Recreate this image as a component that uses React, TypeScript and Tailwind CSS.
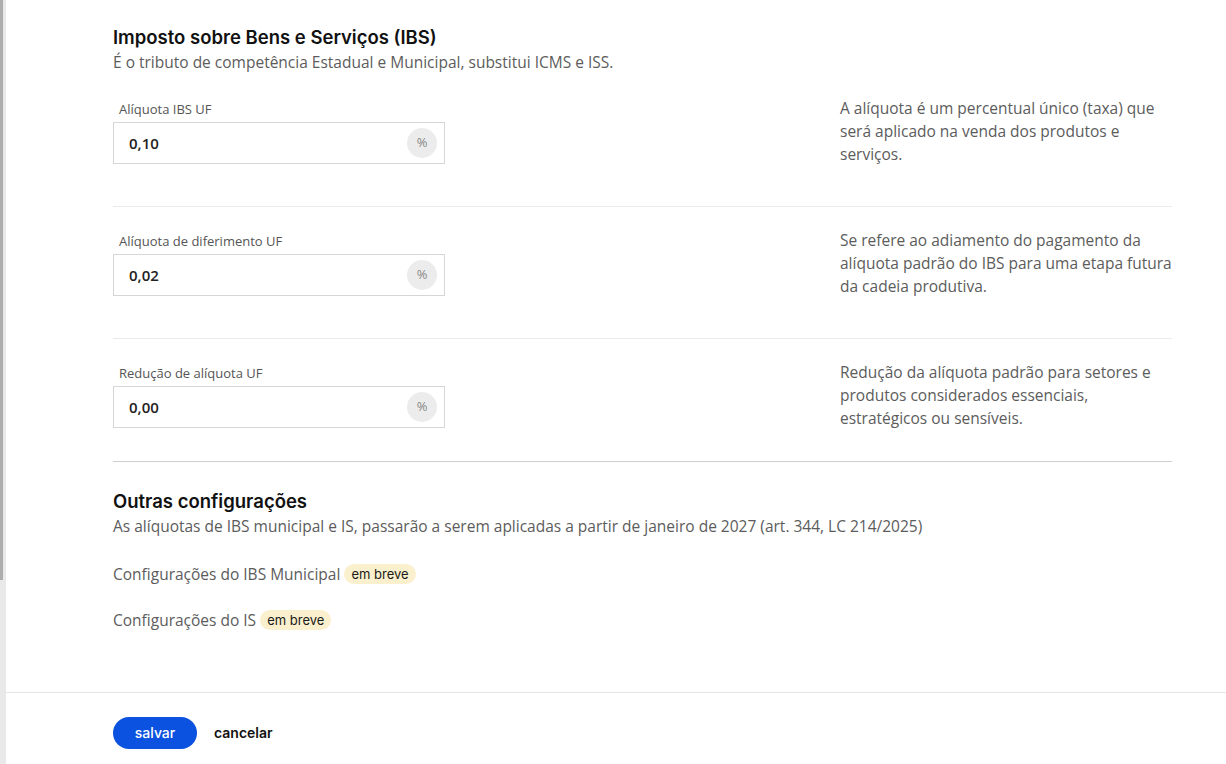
const body = { fontFamily: '"Open Sans", "Noto Sans", sans-serif' };
const head = { fontFamily: 'Inter, "Noto Sans", sans-serif' };

type Field = { label: string; value: string; help: string };

const fields: Field[] = [
  {
    label: "Alíquota IBS UF",
    value: "0,10",
    help: "A alíquota é um percentual único (taxa) que será aplicado na venda dos produtos e serviços.",
  },
  {
    label: "Alíquota de diferimento UF",
    value: "0,02",
    help: "Se refere ao adiamento do pagamento da alíquota padrão do IBS para uma etapa futura da cadeia produtiva.",
  },
  {
    label: "Redução de alíquota UF",
    value: "0,00",
    help: "Redução da alíquota padrão para setores e produtos considerados essenciais, estratégicos ou sensíveis.",
  },
];

function FieldRow({ field, last }: { field: Field; last: boolean }) {
  return (
    <div
      className={`flex items-start justify-between pt-[25px] ${
        last ? "pb-[33px] border-b border-[#cfcfcf]" : "pb-[42px] border-b border-[#ebebeb]"
      }`}
    >
      <div className="w-[332px]">
        <label className="block pl-[6px] text-[13px] leading-[18px] text-[#555]">
          {field.label}
        </label>
        <div className="mt-[4px] flex h-[42px] items-center justify-between border border-[#d6d6d6] bg-white pl-[15px] pr-[7px]">
          <span className="text-[15px] font-semibold text-[#222]">{field.value}</span>
          <span className="flex h-[30px] w-[30px] items-center justify-center rounded-full bg-[#ececec] text-[13px] text-[#888]">
            %
          </span>
        </div>
      </div>
      <p className="-mb-[10px] -mt-[3px] w-[332px] text-[15.5px] leading-[23px] text-[#5c5c5c]">
        {field.help}
      </p>
    </div>
  );
}

function Badge() {
  return (
    <span
      className="ml-[4px] inline-block rounded-full bg-[#fbf0cd] px-[7px] text-[13px] leading-[20px] text-[#1a1a1a]"
      style={head}
    >
      em breve
    </span>
  );
}

export default function App() {
  return (
    <div className="flex h-[764px] bg-white" style={body}>
      <div className="w-[6px] shrink-0 bg-[#e9e9e9]">
        <div className="h-[580px] w-[3px] bg-[#adadad]" />
      </div>

      <div className="flex flex-1 flex-col">
        <main className="flex-1 pl-[107px] pr-[54px] pt-[24px]">
          <h1 className="text-[18.5px] font-semibold leading-[26px] text-[#111]" style={head}>
            Imposto sobre Bens e Serviços (IBS)
          </h1>
          <p className="mt-[1px] text-[15.5px] leading-[22px] text-[#5c5c5c]">
            É o tributo de competência Estadual e Municipal, substitui ICMS e ISS.
          </p>

          <div className="mt-[2px]">
            {fields.map((f, i) => (
              <FieldRow key={f.label} field={f} last={i === fields.length - 1} />
            ))}
          </div>

          <section className="pt-[26px]">
            <h2 className="text-[18.5px] font-semibold leading-[26px] text-[#111]" style={head}>
              Outras configurações
            </h2>
            <p className="mt-[1px] text-[15.5px] leading-[22px] text-[#5c5c5c]">
              As alíquotas de IBS municipal e IS, passarão a serem aplicadas a partir de janeiro de
              2027 (art. 344, LC 214/2025)
            </p>
            <div className="mt-[26px] flex flex-col gap-[24px] text-[15.5px] leading-[22px] text-[#5c5c5c]">
              <div className="flex items-center">
                Configurações do IBS Municipal
                <Badge />
              </div>
              <div className="flex items-center">
                Configurações do IS
                <Badge />
              </div>
            </div>
          </section>
        </main>

        <footer
          className="flex h-[72px] items-center gap-[17px] border-t border-[#e6e6e6] pl-[107px] pt-[8px]"
          style={head}
        >
          <button className="h-[32px] w-[84px] rounded-full bg-[#0a52df] text-[14px] font-medium text-white">
            salvar
          </button>
          <button className="text-[14px] font-semibold text-[#111]">cancelar</button>
        </footer>
      </div>
    </div>
  );
}
